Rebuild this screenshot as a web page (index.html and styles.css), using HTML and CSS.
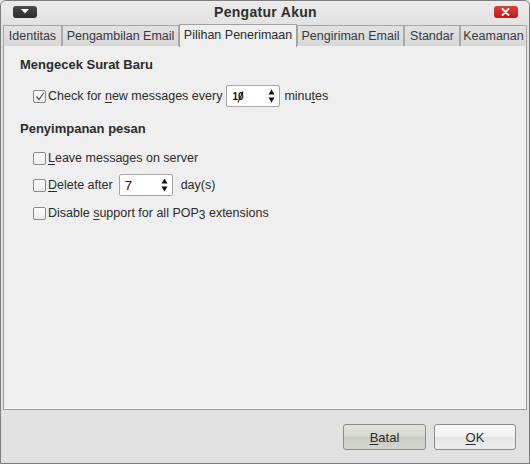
FILE: index.html
```html
<!DOCTYPE html>
<html>
<head>
<meta charset="utf-8">
<link rel="stylesheet" href="styles.css">
</head>
<body>
<div class="window">
  <div class="titlebar">
    <div class="menu-btn"><svg width="8" height="5" viewBox="0 0 8 5"><path d="M0 0 H8 L4 4.5 Z" fill="#fff"/></svg></div>
    <div class="title">Pengatur Akun</div>
    <div class="close-btn"><svg width="9" height="8" viewBox="0 0 9 8"><path d="M1.5 1 L7.5 7 M7.5 1 L1.5 7" stroke="#fff" stroke-width="1.8" stroke-linecap="round"/></svg></div>
  </div>
  <div class="tabs">
    <div class="tab t1">Identitas</div>
    <div class="tab t2">Pengambilan Email</div>
    <div class="tab t3 active">Pilihan Penerimaan</div>
    <div class="tab t4">Pengiriman Email</div>
    <div class="tab t5">Standar</div>
    <div class="tab t6">Keamanan</div>
  </div>
  <div class="panel">
    <div class="heading">Mengecek Surat Baru</div>
    <div class="row first">
      <span class="check checked"><svg width="10" height="10" viewBox="0 0 10 10"><path d="M1.5 5.5 L4 8.5 L9 1.5" fill="none" stroke="#555" stroke-width="1.2"/></svg></span>
      <span>Check for <u>n</u>ew messages every</span>
      <span class="spin wide"><span class="val zero">1<span class="slash">0</span></span><span class="arrows"><svg width="7" height="14" viewBox="0 0 7 14"><path d="M3.5 0.5 L6.5 5.5 H0.5 Z M3.5 13.5 L6.5 8.5 H0.5 Z" fill="#111"/></svg></span></span>
      <span>minu<u>t</u>es</span>
    </div>
    <div class="heading second">Penyimpanan pesan</div>
    <div class="row opt1">
      <span class="check"></span>
      <span><u>L</u>eave messages on server</span>
    </div>
    <div class="row opt2">
      <span class="check"></span>
      <span><u>D</u>elete after</span>
      <span class="spin second-spin"><span class="val">7</span><span class="arrows"><svg width="7" height="14" viewBox="0 0 7 14"><path d="M3.5 0.5 L6.5 5.5 H0.5 Z M3.5 13.5 L6.5 8.5 H0.5 Z" fill="#111"/></svg></span></span>
      <span class="days">day(s)</span>
    </div>
    <div class="row opt3">
      <span class="check"></span>
      <span>Disable <u>s</u>upport for all POP<span class="three">3</span> extensions</span>
    </div>
  </div>
  <div class="footer">
    <button class="btn batal"><u>B</u>atal</button>
    <button class="btn ok"><u>O</u>K</button>
  </div>
</div>
</body>
</html>
```
FILE: styles.css
```css
* { box-sizing: border-box; }
html, body { margin: 0; padding: 0; background: #e2e2e2; }
body {
  font-family: "Liberation Sans", Arial, sans-serif;
  font-size: 12.5px;
  color: #2b2b2b;
}
.window {
  width: 530px;
  height: 464px;
  border: 1px solid #7d7d7d;
  border-radius: 6px 6px 0 0;
  background: #e1e1e1;
  display: flex;
  flex-direction: column;
  overflow: hidden;
}
.titlebar {
  height: 23px;
  flex: none;
  display: flex;
  align-items: center;
  justify-content: space-between;
  padding: 0 11px 2px 12px;
  background: linear-gradient(#ebebeb, #e3e3e3);
}
.menu-btn, .close-btn {
  width: 24px;
  height: 12px;
  border-radius: 3px;
  display: flex;
  align-items: center;
  justify-content: center;
}
.menu-btn { background: linear-gradient(#4a4a4a, #2c2c2c); }
.close-btn { background: linear-gradient(#e0403a, #b81c18); }
.title {
  font-weight: bold;
  font-size: 14px;
  color: #303030;
  letter-spacing: 0.3px;
}
.tabs {
  flex: none;
  height: 22px;
  display: flex;
  align-items: flex-end;
  padding-left: 2px;
  position: relative;
  z-index: 1;
  margin-bottom: -1px;
}
.tab {
  flex: none;
  white-space: nowrap;
  height: 21px;
  border: 1px solid #a8a8a8;
  border-bottom: none;
  background: linear-gradient(#e2e2e2, #d8d8d8);
  color: #363a44;
  line-height: 20px;
  text-align: center;
  overflow: hidden;
}
.t1 { width: 59px; }
.t2 { width: 117px; }
.t3 { width: 118px; }
.t4 { width: 107px; }
.t5 { width: 56px; }
.t6 { width: 67px; }
.tab.active {
  height: 23px;
  background: #efefef;
  border-color: #a0a0a0;
  line-height: 21px;
  margin-bottom: -1px;
  color: #2b2b2b;
}
.panel {
  flex: 1;
  margin: 0 2px;
  border: 1px solid #9a9a9a;
  background: #efefef;
  box-shadow: inset 0 -1px 0 #fafafa;
  padding: 10px 0 0 16px;
}
.heading {
  font-weight: bold;
  font-size: 13px;
  height: 17px;
  line-height: 17px;
  color: #2b2b2b;
}
.heading.second { margin-top: 13px; }
.row {
  display: flex;
  align-items: center;
  padding-left: 13px;
  height: 22px;
}
.row.first { margin-top: 12px; }
.row.opt1 { margin-top: 10px; }
.row.opt2 { margin-top: 5px; }
.row.opt3 { margin-top: 6px; }
.check {
  width: 13px;
  height: 13px;
  border: 1px solid #8a8a8a;
  border-radius: 2px;
  background: linear-gradient(#fdfdfd, #ececec);
  margin-right: 2px;
  display: inline-flex;
  align-items: center;
  justify-content: center;
  flex: none;
}
u { text-decoration: underline; text-underline-offset: 2px; }
.spin {
  width: 54px;
  height: 22px;
  border: 1px solid #a6a6a6;
  border-radius: 2px;
  background: #fff;
  margin: 0 4px 0 4px;
  display: inline-flex;
  align-items: center;
  justify-content: space-between;
  padding: 0 4px 0 5px;
}
.spin.second-spin { margin-left: 6px; margin-right: 6px; }
.spin .val { font-size: 13px; color: #111; }
.spin .val.zero { font-size: 10px; font-weight: bold; }
.slash { position: relative; display: inline-block; }
.slash::after {
  content: "";
  position: absolute;
  left: 2.5px;
  top: 0px;
  width: 1px;
  height: 12px;
  background: #111;
  transform: rotate(25deg);
}
.arrows { display: inline-flex; }
.days { margin-left: 2px; }
.three { font-size: 12px; position: relative; top: 2px; }
.footer {
  flex: none;
  height: 53px;
  display: flex;
  justify-content: flex-end;
  align-items: flex-start;
  padding: 14px 13px 0 0;
  gap: 8px;
}
.btn {
  width: 83px;
  height: 26px;
  font-family: "Liberation Sans", Arial, sans-serif;
  font-size: 13px;
  color: #2b2b2b;
  border: 1px solid #8c8c8c;
  border-radius: 3px;
  padding: 0;
}
.btn.batal {
  background: linear-gradient(#e2e5dd, #d3d7ce 50%, #c8ccc2 51%, #d2d6cc);
}
.btn.ok {
  width: 82px;
  background: linear-gradient(#fafafa, #f1f1f1 50%, #e6e6e6 51%, #eeeeee);
}
```
